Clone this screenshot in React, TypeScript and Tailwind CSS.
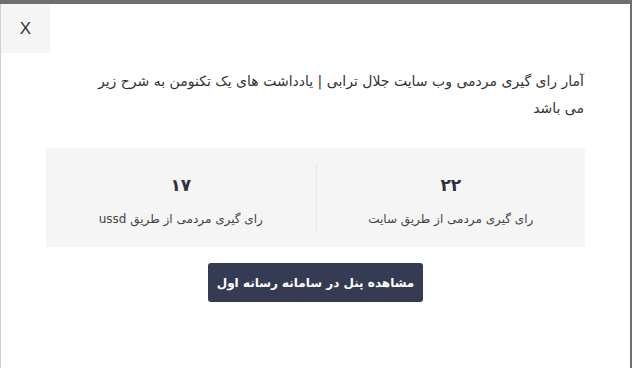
import React from 'react';

const stats = [
    { value: '۲۲', label: 'رای گیری مردمی از طریق سایت' },
    { value: '۱۷', label: 'رای گیری مردمی از طریق ussd' },
];

export default function App() {
    return (
        <div className="h-[368px] w-[632px] overflow-hidden bg-[#6f6f6f] pt-[4px] pr-[2px]" style={{ fontFamily: '"DejaVu Sans", "Noto Sans", sans-serif' }}>
            <div className="h-full bg-white border-l border-[#d0d0d0] flex flex-col">
                {/* Close */}
                <div className="flex">
                    <button className="w-[49px] h-[49px] bg-[#f5f5f5] text-[#333] text-[17px] flex items-center justify-center" style={{ fontFamily: '"Liberation Sans", sans-serif' }}>
                        X
                    </button>
                </div>

                <div dir="rtl" className="px-[45px] pt-[15px]">
                    <p className="text-[14px] leading-[27px] text-[#333] pr-[1px] pl-[40px]">
                        آمار رای گیری مردمی وب سایت جلال ترابی | یادداشت های یک تکنومن به شرح زیر می باشد
                    </p>

                    <div className="mt-[26px] bg-[#f5f5f5] h-[99px] grid grid-cols-2 py-[15px]">
                        {stats.map((s, i) => (
                            <div key={i} className={`flex flex-col items-center justify-center pt-[6px] ${i === 0 ? 'border-l border-[#e6e6e6]' : ''}`}>
                                <div className="text-[17px] font-bold text-[#2d3243] leading-none">{s.value}</div>
                                <div className="mt-[19px] text-[12px] text-[#444] leading-none">{s.label}</div>
                            </div>
                        ))}
                    </div>

                    <div className="flex justify-center mt-[16px]">
                        <button className="w-[215px] h-[39px] bg-[#343b52] rounded-[3px] text-white text-[12px] font-bold">
                            مشاهده پنل در سامانه رسانه اول
                        </button>
                    </div>
                </div>
            </div>
        </div>
    );
}
